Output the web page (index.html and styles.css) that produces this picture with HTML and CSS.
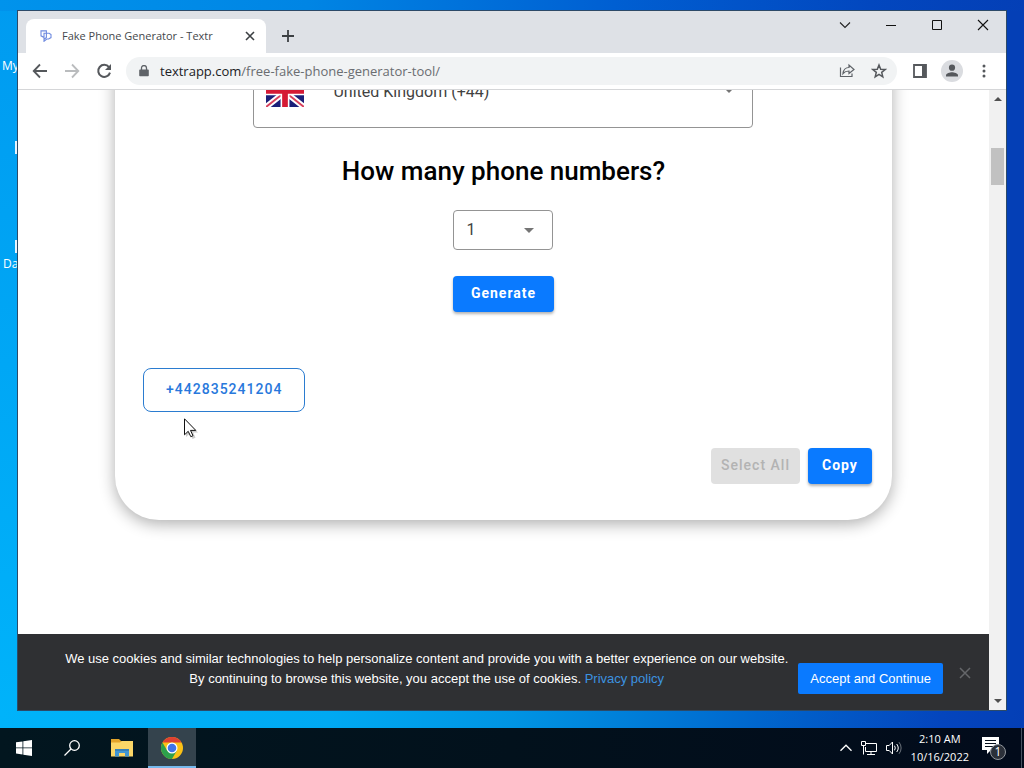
FILE: index.html
```html
<!DOCTYPE html>
<html lang="en">
<head>
<meta charset="utf-8">
<title>Fake Phone Generator - Textr</title>
<link rel="stylesheet" href="styles.css">
</head>
<body>
<div class="desktop">
  <main class="wallpaper">
    <span class="shortcut shortcut-top">My</span>
    <span class="shortcut shortcut-low">Da</span>
    <i class="icon-edge icon-edge-top"></i>
    <i class="icon-edge icon-edge-low"></i>

    <section class="window">
      <header class="tabstrip">
        <div class="tab">
          <svg class="favicon" viewBox="0 0 12 12" width="12" height="12" fill="none" stroke="#6f8be0" stroke-width="1.1"><path d="M1 .9h5.4v6.500L4 9.500V7.400L1 5.800zM4 3.200h5.200L11 4.600v3L8.600 9H6.800L4 11.300z"/></svg>
          <span class="tab-title">Fake Phone Generator - Textr</span>
          <button class="icon-btn" aria-label="Close tab"><svg viewBox="0 0 10 10" width="10" height="10" stroke="#3c4043" stroke-width="1.6"><path d="M1 1l8 8M9 1L1 9"/></svg></button>
        </div>
        <button class="icon-btn new-tab" aria-label="New tab"><svg viewBox="0 0 12 12" width="12" height="12" stroke="#3c4043" stroke-width="1.8"><path d="M6 0v12M0 6h12"/></svg></button>
        <div class="window-controls">
          <button class="icon-btn" aria-label="Search tabs"><svg viewBox="0 0 12 12" width="12" height="12" fill="none" stroke="#222" stroke-width="1.1"><path d="M1 3.5l5 5 5-5"/></svg></button>
          <button class="icon-btn" aria-label="Minimize"><svg viewBox="0 0 12 12" width="12" height="12" stroke="#111"><path d="M1 6.5h10"/></svg></button>
          <button class="icon-btn" aria-label="Maximize"><svg viewBox="0 0 12 12" width="12" height="12" fill="none" stroke="#111"><path d="M1.500 1.500h9v9h-9z"/></svg></button>
          <button class="icon-btn" aria-label="Close"><svg viewBox="0 0 12 12" width="12" height="12" stroke="#111" stroke-width="1.100"><path d="M1 1l10 10M11 1L1 11"/></svg></button>
        </div>
      </header>

      <nav class="toolbar">
        <button class="icon-btn" aria-label="Back"><svg viewBox="0 0 16 16" width="16" height="16" fill="none" stroke="#55585c" stroke-width="1.8"><path d="M15 8H2M8 1.500L1.700 8 8 14.500"/></svg></button>
        <button class="icon-btn" aria-label="Forward"><svg viewBox="0 0 16 16" width="16" height="16" fill="none" stroke="#babcbe" stroke-width="1.8"><path d="M1 8h13M8 1.500L14.300 8 8 14.500"/></svg></button>
        <button class="icon-btn" aria-label="Reload"><svg viewBox="0 0 16 16" width="16" height="16"><path d="M13 4.200A6 6 0 1 0 14 9.600" fill="none" stroke="#55585c" stroke-width="2"/><path d="M15 1v6H9z" fill="#55585c"/></svg></button>
        <div class="omnibox">
          <svg viewBox="0 0 10 12" width="10" height="12"><path d="M1 4.500h8a.8.8 0 0 1 .8.800v5.200a.8.8 0 0 1-.8.800H1a.8.8 0 0 1-.8-.8V5.300A.8.8 0 0 1 1 4.500z" fill="#5f6368"/><path d="M2.500 5V3a2.500 2.500 0 0 1 5 0v2" fill="none" stroke="#5f6368" stroke-width="1.300"/></svg>
          <span class="url"><span class="host">textrapp.com</span>/free-fake-phone-generator-tool/</span>
          <button class="icon-btn" aria-label="Share"><svg viewBox="0 0 16 16" width="16" height="16" fill="none" stroke="#5f6368" stroke-width="1.200"><path d="M1.500 4.500v9h11.500v-3M4 10.500c.5-4 2.500-6 6-6V2l5 4.500-5 4V8c-2.700 0-4.500.7-6 2.500z"/></svg></button>
          <button class="icon-btn" aria-label="Bookmark"><svg viewBox="0 0 16 16" width="16" height="16" fill="none" stroke="#55585c" stroke-width="1.500"><path d="M8 2l1.700 4.200 4.500.3-3.500 2.900 1.100 4.400L8 11.400l-3.800 2.400 1.100-4.400-3.500-2.900 4.500-.3z"/></svg></button>
        </div>
        <button class="icon-btn side-panel" aria-label="Side panel"><svg viewBox="0 0 14 14" width="14" height="14"><path d="M1 1h12v12H1z" fill="none" stroke="#55585c" stroke-width="1.800"/><path d="M9 1h4v12H9z" fill="#55585c"/></svg></button>
        <button class="icon-btn profile" aria-label="Profile"><svg viewBox="0 0 22 22" width="22" height="22"><circle cx="11" cy="11" r="11" fill="#dadce0"/><circle cx="11" cy="7.700" r="3.100" fill="#55585c"/><path d="M5 16.500v-1.300c0-2 4-3 6-3s6 1 6 3v1.300z" fill="#55585c"/></svg></button>
        <button class="icon-btn menu" aria-label="Menu"><svg viewBox="0 0 4 14" width="4" height="14" fill="#55585c"><circle cx="2" cy="2" r="1.500"/><circle cx="2" cy="7" r="1.500"/><circle cx="2" cy="12" r="1.500"/></svg></button>
      </nav>

      <div class="viewport">
        <div class="page">
          <form class="card">
            <label class="field country">
              <svg class="flag" viewBox="0 0 60 46" width="38" height="30" preserveAspectRatio="none"><path fill="#1b1f78" d="M0 0h60v46H0z"/><path d="M0 0l60 46M60 0L0 46" stroke="#fff" stroke-width="9"/><path d="M0 0l60 46M60 0L0 46" stroke="#d8405c" stroke-width="3"/><path d="M30 0v46M0 21h60" stroke="#fff" stroke-width="14"/><path d="M30 0v46M0 21h60" stroke="#d51a34" stroke-width="9"/></svg>
              <select aria-label="Country"><option>United Kingdom (+44)</option></select>
              <svg class="caret" viewBox="0 0 10 5" width="10" height="5"><path d="M0 0h10L5 5z" fill="#757575"/></svg>
            </label>
            <h2 class="question" id="question">How many phone numbers?</h2>
            <label class="field amount">
              <select aria-labelledby="question"><option>1</option></select>
              <svg viewBox="0 0 10 5" width="10" height="5"><path d="M0 0h10L5 5z" fill="#757575"/></svg>
            </label>
            <button type="button" class="btn btn-generate">Generate</button>
            <button type="button" class="number">+442835241204</button>
            <div class="actions">
              <button type="button" class="btn btn-select" disabled>Select All</button>
              <button type="button" class="btn btn-copy">Copy</button>
            </div>
          </form>
          <aside class="cookies">
            <p class="cookies-text">We use cookies and similar technologies to help personalize content and provide you with a better experience on our website.<br>By continuing to browse this website, you accept the use of cookies. <a href="#">Privacy policy</a></p>
            <button class="accept">Accept and Continue</button>
            <button class="icon-btn dismiss" aria-label="Dismiss"><svg viewBox="0 0 12 12" width="12" height="12" stroke="#65676a" stroke-width="1.500"><path d="M1 1l10 10M11 1L1 11"/></svg></button>
          </aside>
        </div>
        <div class="scrollbar">
          <svg viewBox="0 0 8 4" width="8" height="4"><path d="M0 4h8L4 0z" fill="#505050"/></svg>
          <div class="track"><div class="thumb"></div></div>
          <svg viewBox="0 0 8 4" width="8" height="4"><path d="M0 0h8L4 4z" fill="#505050"/></svg>
        </div>
      </div>
    </section>

    <svg class="pointer" viewBox="0 0 16 22" width="16" height="22"><path d="M2 2v17l4-3.500 2.500 5.500 3-1.300L9.200 14.500H14z" fill="#000" opacity=".2"/><path d="M.5.800v16L4.200 13.300l2.600 5.400 2.200-1-2.500-5.300h5.300z" fill="#fff" stroke="#111"/></svg>
  </main>

  <footer class="taskbar">
    <button class="task" aria-label="Start"><svg viewBox="0 0 16 16" width="16" height="16" fill="#fff"><path d="M0 2.300l6.500-.9v6.100H0zM7.300 1.300L16 0v7.500H7.300zM0 8.300h6.500v6.200L0 13.600zM7.300 8.300H16V16l-8.700-1.300z"/></svg></button>
    <button class="task" aria-label="Search"><svg viewBox="0 0 16 16" width="16" height="16" fill="none" stroke="#fff" stroke-width="1.300"><circle cx="10.500" cy="5.500" r="4.800"/><path d="M7 9L.5 15.500"/></svg></button>
    <button class="task task-pinned" aria-label="File Explorer"><svg viewBox="0 0 22 18" width="22" height="18"><path d="M0 0h8l2 2h11v3H0z" fill="#e2a32a"/><path d="M0 3.500h9l2-1.500h11v15.500H0z" fill="#fbd667"/><path d="M4 17.500V10h14v7.500h-4V14H8v3.500z" fill="#4296d2"/><path d="M4 10h14v2H4z" fill="#357fb8"/></svg></button>
    <button class="task task-pinned task-active" aria-label="Google Chrome"><svg viewBox="0 0 24 24" width="24" height="24"><circle cx="12" cy="12" r="11" fill="#fbc116"/><path d="M2.470 6.500A11 11 0 0 1 21.530 6.500H12z" fill="#dd4132"/><path d="M2.470 6.500A11 11 0 0 0 12 23l4.760-8.250H7.240z" fill="#2da04c"/><circle cx="12" cy="12" r="5.500" fill="#fff"/><circle cx="12" cy="12" r="4.300" fill="#4174e8"/></svg></button>
    <div class="tray">
      <svg viewBox="0 0 12 8" width="12" height="8" fill="none" stroke="#fff" stroke-width="1.300"><path d="M.5 6.800L6 1.200l5.500 5.600"/></svg>
      <svg viewBox="0 0 16 14" width="16" height="14" fill="none" stroke="#fff"><path d="M5 2.500h10.500v8H4.500V6M10 10.500v3M6 13.500h8M.5.500h4v4h-4zM2.500 4.500v9"/></svg>
      <svg viewBox="0 0 16 14" width="16" height="14" fill="none" stroke="#fff"><path d="M.5 4.500h2.700L6.500 1v12L3.200 9.500H.5z"/><path d="M8.500 4.700a4 4 0 0 1 0 4.600M10.700 3a6.500 6.500 0 0 1 0 8"/><path d="M13 1.200a9 9 0 0 1 0 11.600" stroke="#6d747c"/></svg>
      <div class="clock"><time>2:10 AM</time><time>10/16/2022</time></div>
      <svg viewBox="0 0 26 26" width="26" height="26"><path d="M0 2h17v13H9l-4 4v-4H0z" fill="#fff"/><path d="M3 5.500h11M3 8.500h11M3 11.500h8" stroke="#06101c"/><circle cx="16" cy="17" r="7.500" fill="#2b3039" stroke="#92979d"/><text x="16" y="21" text-anchor="middle" class="badge-count">1</text></svg>
    </div>
  </footer>
</div>
</body>
</html>
```
FILE: styles.css
```css
* { box-sizing: border-box; }

body { margin: 0; font-family: Roboto, sans-serif; }

button { font: inherit; cursor: default; }

.desktop {
  display: flex;
  flex-direction: column;
  height: 100vh;
  overflow: hidden;
}

.wallpaper {
  position: relative;
  flex: 1;
  background:
    linear-gradient(to right, #00b3fa 0%, #00a9f2 32%, #0094e3 50%, #0066cd 74%, #0445bd 92%, #043fb6 100%) bottom / 100% 18px no-repeat,
    linear-gradient(to right, #0093ec 0%, #0085e4 30%, #005fd2 60%, #0247bf 85%, #043fb6 100%) top / 100% 11px no-repeat,
    linear-gradient(#009bf0, #00b3fa) left / 18px 100% no-repeat,
    #043fb6;
}

.shortcut {
  position: absolute;
  color: #fff;
  font: 12px/16px "Open Sans", sans-serif;
}
.shortcut-top { left: 2px; top: 58px; }
.shortcut-low { left: 3px; top: 256px; }

.icon-edge {
  position: absolute;
  left: 15px;
  width: 2px;
  height: 13px;
  background: #e8f4fd;
}
.icon-edge-top { top: 141px; }
.icon-edge-low { top: 240px; }

.window {
  position: absolute;
  inset: 10px 17px 17px 17px;
  display: flex;
  flex-direction: column;
  border: 1px solid #2c4a68;
  background: #fff;
}

.icon-btn {
  display: flex;
  align-items: center;
  justify-content: center;
  padding: 0;
  border: 0;
  background: none;
}

.tabstrip {
  display: flex;
  height: 42px;
  padding: 8px 0 0 8px;
  background: #dee1e6;
}

.tab {
  display: flex;
  align-items: center;
  gap: 10px;
  width: 240px;
  padding: 0 11px 0 14px;
  border-radius: 8px 8px 0 0;
  background: #fff;
}
.tab-title {
  flex: 1;
  color: #45484c;
  font: 11px/16px "Open Sans", sans-serif;
  white-space: nowrap;
}
.new-tab { margin-left: 16px; }

.window-controls {
  display: flex;
  height: 12px;
  margin-left: auto;
}
.window-controls .icon-btn { width: 46px; }

.toolbar {
  display: flex;
  align-items: center;
  gap: 16px;
  height: 37px;
  padding: 0 20px 0 14px;
  border-bottom: 1px solid #d5d6d8;
}

.omnibox {
  display: flex;
  align-items: center;
  flex: 1;
  gap: 16px;
  height: 28px;
  margin-left: -2px;
  padding: 0 10px 0 13px;
  border-radius: 14px;
  background: #f1f3f4;
}
.url {
  flex: 1;
  margin-left: -5px;
  color: #6a6d71;
  font: 13px/18px "Open Sans", sans-serif;
  white-space: nowrap;
}
.host { color: #202124; }
.profile { margin-left: -2px; }
.menu { margin-left: 3px; }

.viewport {
  display: flex;
  flex: 1;
  min-height: 0;
}

.page {
  display: flex;
  flex: 1;
  flex-direction: column;
  justify-content: space-between;
  overflow: hidden;
}

.card {
  display: flex;
  flex-direction: column;
  align-items: center;
  width: 80%;
  margin: -60px auto 0;
  padding: 26px 20px 36px;
  border-radius: 44px;
  background: #fff;
  box-shadow: 0 4px 16px rgba(0, 0, 0, .32);
}

.field {
  display: flex;
  align-items: center;
  border: 1px solid #949494;
  border-radius: 4px;
}
.field select {
  flex: 1;
  min-width: 0;
  padding: 0;
  border: 0;
  background: none;
  color: #424242;
  font: 16px/24px Roboto, sans-serif;
  appearance: none;
}

.country {
  width: 500px;
  max-width: 100%;
  height: 72px;
  padding: 0 18px 0 12px;
  gap: 29px;
}
.country .caret { margin-bottom: 4px; }
.question {
  margin: 26px 0 22px;
  color: #000;
  font-size: 26px;
  font-weight: 500;
  line-height: 34px;
}
.amount {
  width: 100px;
  height: 40px;
  padding: 0 18px 0 12px;
}

.btn {
  height: 36px;
  padding: 0 14px 2px;
  border: 0;
  border-radius: 4px;
  background: #0a7aff;
  color: #fff;
  font-size: 14px;
  font-weight: 700;
  letter-spacing: 1px;
  box-shadow: 0 2px 3px rgba(0, 0, 0, .3);
}
.btn-generate {
  margin-top: 26px;
  padding: 0 18px 2px;
}

.number {
  align-self: flex-start;
  height: 44px;
  margin: 56px 0 0 8px;
  padding: 0 22px 2px;
  border: 1px solid #2b7cd0;
  border-radius: 8px;
  background: #fff;
  color: #2878dc;
  font-size: 14px;
  font-weight: 500;
  letter-spacing: 1px;
}

.actions {
  display: flex;
  align-self: flex-end;
  gap: 8px;
  margin-top: 36px;
}
.btn-select {
  padding: 0 10px 2px;
  background: #e0e0e0;
  color: #b3b3b3;
  font-weight: 500;
  box-shadow: none;
}

.cookies {
  display: flex;
  align-items: flex-start;
  justify-content: flex-end;
  gap: 10px;
  padding: 15px 18px 16px;
  background: #2f3033;
  font-family: "Liberation Sans", sans-serif;
  font-size: 13px;
}
.cookies-text {
  margin: 0;
  color: #fff;
  line-height: 20px;
  text-align: center;
}
.cookies-text a { color: #3c93e0; text-decoration: none; }
.accept {
  height: 31px;
  margin-top: 14px;
  padding: 0 12px;
  border: 0;
  border-radius: 2px;
  background: #0a7aff;
  color: #fff;
  white-space: nowrap;
}
.dismiss { margin: 18px 0 0 6px; }

.scrollbar {
  display: flex;
  flex-direction: column;
  align-items: center;
  justify-content: space-between;
  width: 17px;
  padding: 7px 0;
  background: #f1f1f1;
}
.track { flex: 1; width: 13px; padding-top: 47px; }
.thumb { height: 37px; background: #c1c1c1; }

.pointer { position: absolute; left: 184px; top: 418px; }

.taskbar {
  display: flex;
  height: 40px;
  background: linear-gradient(to right, #02161f, #02111c 50%, #020b1b);
}
.task {
  display: flex;
  align-items: center;
  justify-content: center;
  width: 48px;
  padding: 0;
  border: 0;
  background: none;
}
.task-pinned { margin-left: 2px; }
.task-active {
  padding-top: 2px;
  border-bottom: 2px solid #76b9ed;
  background: #34434d;
}

.tray {
  display: flex;
  align-items: center;
  gap: 9px;
  margin: 0 2px 0 auto;
  padding-right: 13px;
  border-right: 1px solid #475260;
}
.clock {
  display: flex;
  flex-direction: column;
  margin-right: 4px;
  color: #fff;
  font: 11px/18px "Open Sans", sans-serif;
  text-align: center;
}
.badge-count { fill: #fff; font: 12px "Open Sans", sans-serif; }
```
